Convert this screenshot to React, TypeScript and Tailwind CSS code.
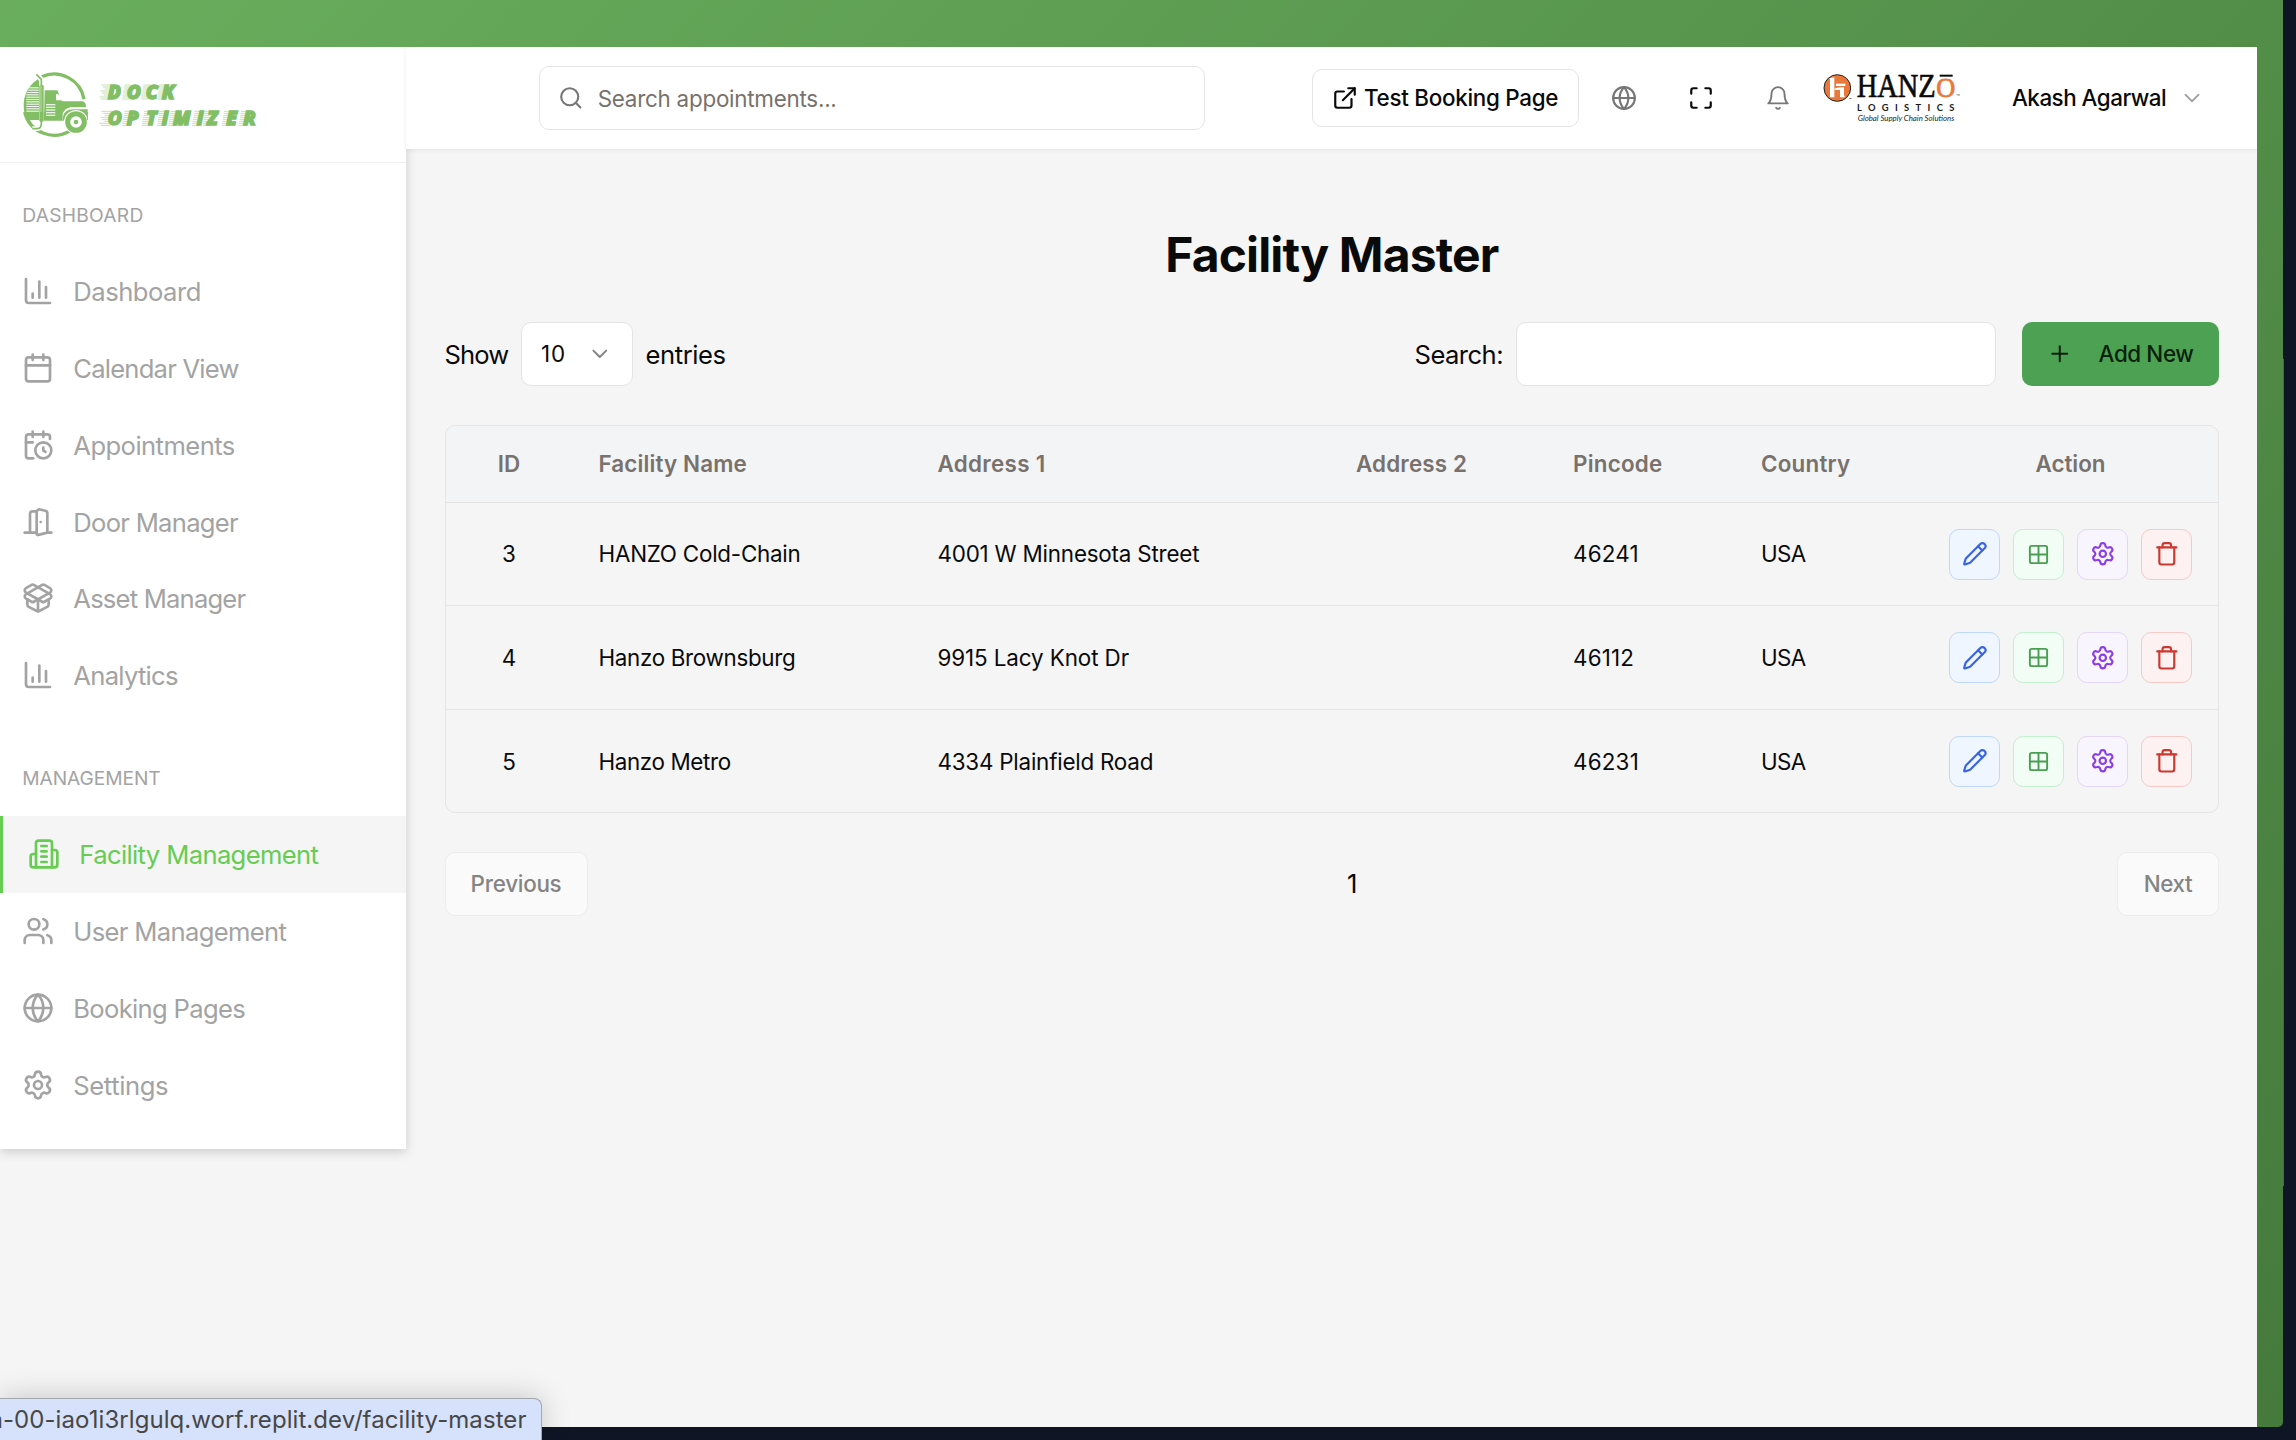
import {
  Calendar,
  CalendarClock,
  ChartColumn,
  ChevronDown,
  DoorOpen,
  ExternalLink,
  Globe,
  Grid2x2,
  Maximize,
  PackageOpen,
  Pencil,
  Plus,
  Search,
  Settings,
  Trash,
  Users,
} from "lucide-react";
import type { ComponentType } from "react";

type IconType = ComponentType<{ className?: string; strokeWidth?: number | string }>;
type NavEntry = { label: string; icon: IconType; tracking: string; active?: boolean };

function BuildingIcon({ className, strokeWidth = 2 }: { className?: string; strokeWidth?: number | string }) {
  return (
    <svg viewBox="0 0 24 24" fill="none" stroke="currentColor" strokeWidth={strokeWidth} strokeLinecap="round" strokeLinejoin="round" className={className}>
      <path d="M6 22V4a2 2 0 0 1 2-2h8a2 2 0 0 1 2 2v18Z" />
      <path d="M6 12H4a2 2 0 0 0-2 2v6a2 2 0 0 0 2 2h2" />
      <path d="M18 9h2a2 2 0 0 1 2 2v9a2 2 0 0 1-2 2h-2" />
      <path d="M10 6h4M10 10h4M10 14h4M10 18h4" />
    </svg>
  );
}

const dashboardNav: NavEntry[] = [
  { label: "Dashboard", icon: ChartColumn, tracking: "tracking-[-0.5px]" },
  { label: "Calendar View", icon: Calendar, tracking: "tracking-[-0.78px]" },
  { label: "Appointments", icon: CalendarClock, tracking: "tracking-[-0.56px]" },
  { label: "Door Manager", icon: DoorOpen, tracking: "tracking-[-0.72px]" },
  { label: "Asset Manager", icon: PackageOpen, tracking: "tracking-[-0.8px]" },
  { label: "Analytics", icon: ChartColumn, tracking: "tracking-[-0.72px]" },
];

const managementNav: NavEntry[] = [
  { label: "Facility Management", icon: BuildingIcon, tracking: "tracking-[-0.63px]", active: true },
  { label: "User Management", icon: Users, tracking: "tracking-[-0.65px]" },
  { label: "Booking Pages", icon: Globe, tracking: "tracking-[-0.68px]" },
  { label: "Settings", icon: Settings, tracking: "tracking-[-0.4px]" },
];

const facilities = [
  { id: 3, name: "HANZO Cold-Chain", nameT: "tracking-[-0.23px]", address: "4001 W Minnesota Street", addressT: "tracking-[-0.2px]", pin: "46241" },
  { id: 4, name: "Hanzo Brownsburg", nameT: "tracking-[-0.32px]", address: "9915 Lacy Knot Dr", addressT: "tracking-[-0.1px]", pin: "46112" },
  { id: 5, name: "Hanzo Metro", nameT: "tracking-[-0.37px]", address: "4334 Plainfield Road", addressT: "tracking-[-0.22px]", pin: "46231" },
];

const DOCK_X = [323, 380, 437, 485];
const OPTIMIZER_X = [323, 380, 439, 485, 519, 590, 622, 679, 730];

function SpeedLines({ xs, top }: { xs: number[]; top: number }) {
  return (
    <>
      {xs.map((x, i) =>
        [0, 1, 2, 3, 4, 5, 6, 7].map((n) => (
          <line
            key={`${i}-${n}`}
            x1={x - (i === 0 ? 26 - (n % 3) * 6 : 14) + (7 - n)}
            x2={x + 8 + (7 - n)}
            y1={top + n * 6}
            y2={top + n * 6}
            stroke="#82be64"
            strokeOpacity={0.6}
            strokeWidth={2.4}
          />
        )),
      )}
    </>
  );
}

function DockLogo() {
  return (
    <svg viewBox="60 120 720 210" className="h-[70px] w-[240px]" fill="none">
      <path d="M125 140A91 91 0 0 1 252 208" stroke="#82be64" strokeWidth="10" />
      <path d="M74 252Q60 186 113 148L117 152V268H84Z" fill="#82be64" />
      <path d="M74 246A91 91 0 0 0 212 301" stroke="#82be64" strokeWidth="10" />
      {[0, 1, 2, 3, 4, 5, 6, 7, 8, 9, 10].map((n) => (
        <rect key={n} x={n < 4 ? 88 - n * 3 : 79} y={172 + n * 7} width={n < 4 ? 28 + n * 3 : 38} height="3" fill="#fff" />
      ))}
      <path d="M84 246H134V270H88L78 256Z" fill="#82be64" />
      <path d="M109 133L124 147V282Q124 296 112 296H97" stroke="#fff" strokeWidth="14" />
      <path d="M109 133L124 148V280Q124 296 112 296H97" stroke="#82be64" strokeWidth="5" />
      <rect x="118" y="164" width="13" height="112" rx="5" fill="#82be64" />
      <rect x="122" y="166" width="2" height="80" fill="#fff" opacity=".7" />
      <path d="M134 181H172L179 198L174 192L168 193V211H183L188 214H248Q258 216 258 232H212Q196 234 188 250V272H132Z" fill="#82be64" />
      {[0, 1, 2, 3, 4].map((n) => (
        <rect key={n} x="138" y={222 + n * 8} width="28" height="4" fill="#fff" opacity=".85" />
      ))}
      <path d="M189 272V262Q192 238 220 238H263V272L259 272Q252 244 228 244Q200 244 195 272Z" fill="#82be64" />
      <circle cx="228" cy="276" r="36" fill="#fff" />
      <circle cx="228" cy="276" r="25" stroke="#82be64" strokeWidth="15" />
      <circle cx="228" cy="276" r="7" fill="#82be64" />
      <path d="M262 246V270" stroke="#82be64" strokeWidth="3" />
      <SpeedLines xs={DOCK_X} top={165} />
      <SpeedLines xs={OPTIMIZER_X} top={244} />
      <g fill="#82be64" stroke="#82be64" strokeWidth="4" className="font-['Open_Sans'] text-[58px] font-extrabold italic">
        <text y="206" x={DOCK_X.join(" ")}>DOCK</text>
        <text y="285" x={OPTIMIZER_X.join(" ")}>OPTIMIZER</text>
      </g>
    </svg>
  );
}

function HanzoLogo() {
  return (
    <svg viewBox="126 66 420 216" className="h-[72px] w-[140px]" fill="none">
      <circle cx="172" cy="144" r="40" fill="#e8793a" stroke="#222" strokeWidth="3" />
      <path d="M148 115L163 112V172H150V118Z" fill="#fff" />
      <path d="M168 131H196V138H168Z" fill="#fff" />
      <path d="M163 146Q172 140 192 142V166Q192 170 197 172H182Q180 172 180 168V150H163Z" fill="#fff" />
      <text x="206" y="179" fontSize="9" fill="#111" className="font-['Liberation_Sans'] font-bold">™</text>
      <text x="230" y="172" textLength="237" lengthAdjust="spacingAndGlyphs" fontSize="101" fill="#0a0a0a" stroke="#0a0a0a" strokeWidth="2" className="font-['Liberation_Serif']">
        HANZ
      </text>
      <text x="469" y="171" textLength="57" lengthAdjust="spacingAndGlyphs" fontSize="82" fill="#e8793a" stroke="#e8793a" strokeWidth="2.5" className="font-['Liberation_Serif']">
        O
      </text>
      <rect x="479" y="104" width="39" height="6" fill="#0a0a0a" />
      <text x="527" y="171" fontSize="13" fill="#555" className="font-['Liberation_Sans']">™</text>
      <text x="231" y="212" fontSize="28" fill="#1a1a1a" textLength="292" className="font-['Lato'] font-bold">LOGISTICS</text>
      <text x="233" y="243" fontSize="20" fill="#222" textLength="290" lengthAdjust="spacingAndGlyphs" className="font-['Lato'] italic">
        Global Supply Chain Solutions
      </text>
    </svg>
  );
}

function BellIcon() {
  return (
    <svg viewBox="0 0 24 24" fill="none" stroke="currentColor" strokeWidth="1.7" strokeLinecap="round" strokeLinejoin="round" className="size-[26px] text-[#777]">
      <path d="M6 8a6 6 0 0 1 12 0c0 7 3 9 3 9H3s3-2 3-9" />
      <path d="M10.3 21a1.94 1.94 0 0 0 3.4 0" />
    </svg>
  );
}

function NavItem({ label, icon: Icon, tracking, active }: NavEntry) {
  return (
    <a
      className={`flex h-[76.8px] items-center gap-[19.3px] whitespace-nowrap text-[25.6px] leading-none ${
        active ? "border-l-[3px] border-[#66cc52] bg-[#f5f5f5] pl-[25px] text-[#66cc52]" : "pl-[22px] text-[#a3a3a3]"
      }`}
    >
      <Icon className="size-8 shrink-0" strokeWidth={2} />
      <span className={`pt-[1.5px] ${tracking}`}>{label}</span>
    </a>
  );
}

function Sidebar() {
  return (
    <aside className="relative z-10 h-[1101.8px] w-[406px] shrink-0 bg-white shadow-[0_3px_10px_rgba(0,0,0,0.17)]">
      <div className="flex h-[116px] items-start border-b border-[#f2f2f2] pt-[23px] pl-5">
        <DockLogo />
      </div>
      <nav className="pt-[37.8px]">
        <h2 className="h-7 pl-[22.3px] text-[19.2px] leading-7 tracking-[0.25px] text-[#a3a3a3]">DASHBOARD</h2>
        <div className="pt-6">
          {dashboardNav.map((n) => (
            <NavItem key={n.label} {...n} />
          ))}
        </div>
        <h2 className="mt-[50.4px] h-7 pl-[22.3px] text-[19.2px] leading-7 tracking-[-0.08px] text-[#a3a3a3]">MANAGEMENT</h2>
        <div className="pt-6">
          {managementNav.map((n) => (
            <NavItem key={n.label} {...n} />
          ))}
        </div>
      </nav>
    </aside>
  );
}

function Header() {
  return (
    <header className="relative z-20 flex h-[102px] items-center bg-white pl-[133px] text-[22.4px] leading-none whitespace-nowrap shadow-[0_1px_4px_rgba(0,0,0,0.08)]">
      <div className="flex h-16 w-[666px] items-center rounded-[10px] border border-[#e4e4e4] pl-[17.5px]">
        <Search className="size-[25.6px] text-[#777]" strokeWidth={2} />
        <span className="pt-0.5 pl-[14.6px] tracking-[-0.24px] text-[#78716c]">Search appointments...</span>
      </div>
      <button className="ml-[107px] flex h-[58px] w-[267px] items-center rounded-[10px] border border-[#e4e4e4] pl-[18.5px] font-medium text-[#0a0a0a]">
        <ExternalLink className="size-[26px]" strokeWidth={2} />
        <span className="pl-[6.5px] tracking-[-0.28px]">Test Booking Page</span>
      </button>
      <Globe className="ml-[32px] size-[26px] text-[#777]" strokeWidth={2} />
      <Maximize className="ml-[51px] size-[26px] text-[#0a0a0a]" strokeWidth={2} />
      <div className="ml-[51px]">
        <BellIcon />
      </div>
      <div className="ml-[31px]">
        <HanzoLogo />
      </div>
      <span className="ml-[50px] font-medium tracking-[-0.5px] text-[#0a0a0a]">Akash Agarwal</span>
      <ChevronDown className="ml-[13px] size-[26px] text-[#a3a3a3]" strokeWidth={1.7} />
    </header>
  );
}

const actions: { icon: IconType; box: string; size: string }[] = [
  { icon: Pencil, box: "border-[#bfd7fb] bg-[#eff6ff] text-[#3763e6]", size: "size-[25.6px]" },
  { icon: Grid2x2, box: "border-[#c2f0cf] bg-[#f2fdf5] text-[#4a9f52]", size: "size-[23px]" },
  { icon: Settings, box: "border-[#e4d5fb] bg-[#f9f5ff] text-[#8b3ee6]", size: "size-[25.6px]" },
  { icon: Trash, box: "border-[#f6c9c6] bg-[#fdf2f1] text-[#cb3830]", size: "size-[25.6px]" },
];

const cols = "grid grid-cols-[127px_339px_418.5px_217px_188px_188px_1fr] items-center";

function FacilityTable() {
  return (
    <div className="mt-[39px] h-[388px] overflow-hidden rounded-[10px] border border-[#e4e4e4] text-[22.4px] leading-none whitespace-nowrap text-[#0a0a0a]">
      <div className={`${cols} h-[77px] border-b border-[#e4e2e1] bg-[#f3f4f6] pt-px font-semibold text-[#78716c]`}>
        <div className="text-center">ID</div>
        <div className="pl-[26px] tracking-[0.13px]">Facility Name</div>
        <div className="pl-[26px] tracking-[0.3px]">Address 1</div>
        <div className="pl-[26px] tracking-[0.15px]">Address 2</div>
        <div className="pl-[26px] tracking-[0.22px]">Pincode</div>
        <div className="pl-[26px] tracking-[0.22px]">Country</div>
        <div className="text-center">Action</div>
      </div>
      {facilities.map((f) => (
        <div key={f.id} className={`${cols} h-[103.3px] border-b border-[#e4e4e4] last:border-0`}>
          <div className="pt-px text-center">{f.id}</div>
          <div className={`pt-px pl-[26px] ${f.nameT}`}>{f.name}</div>
          <div className={`pt-px pl-[26px] ${f.addressT}`}>{f.address}</div>
          <div />
          <div className="pt-px pl-[26px] tracking-[0.2px]">{f.pin}</div>
          <div className="pt-px pl-[26px] tracking-[-0.6px]">USA</div>
          <div className="flex justify-center gap-[12.8px]">
            {actions.map(({ icon: Icon, box, size }, i) => (
              <button key={i} className={`flex size-[51.2px] items-center justify-center rounded-[10px] border ${box}`}>
                <Icon className={size} strokeWidth={2} />
              </button>
            ))}
          </div>
        </div>
      ))}
    </div>
  );
}

function Content() {
  return (
    <section className="flex flex-col pt-[76px] pr-[38px] pl-[38.5px] text-[#0a0a0a]">
      <h1 className="text-center text-[48px] leading-[60px] font-bold tracking-[-0.86px]">Facility Master</h1>
      <div className="mt-[37px] flex h-16 items-center text-[25.6px] leading-none whitespace-nowrap">
        <span className="w-[76px] pt-[1.5px] tracking-[-0.9px]">Show</span>
        <div className="flex h-16 w-28 items-center justify-between rounded-[10px] border border-[#e4e4e4] bg-white pr-[19px] pl-[19.5px] text-[22.4px]">
          <span className="tracking-[0.8px]">10</span>
          <ChevronDown className="size-[25.6px] text-[#858585]" strokeWidth={1.9} />
        </div>
        <span className="ml-[13px] pt-[1.5px] tracking-[-0.43px]">entries</span>
        <span className="ml-auto pt-[1.5px] tracking-[-0.55px]">Search:</span>
        <div className="ml-[13px] h-16 w-[480px] rounded-[10px] border border-[#e4e4e4] bg-white" />
        <button className="ml-[26px] flex h-16 w-[197px] items-center rounded-[10px] bg-[#4da153] pl-[25px] text-[22.4px] font-medium text-[#0c210d]">
          <Plus className="size-[25.6px]" strokeWidth={1.9} />
          <span className="pl-[26px] tracking-[-0.4px]">Add New</span>
        </button>
      </div>
      <FacilityTable />
      <div className="mt-[39px] flex h-16 items-center justify-between text-[22.4px] leading-none font-medium">
        <button className="h-16 w-[143px] rounded-[10px] border border-[#ececec] bg-[#fafafa] pt-px tracking-[-0.26px] text-[#848484]">Previous</button>
        <span className="text-[25.6px] font-normal">1</span>
        <button className="h-16 w-[102px] rounded-[10px] border border-[#ececec] bg-[#fafafa] pt-px tracking-[-0.4px] text-[#848484]">Next</button>
      </div>
    </section>
  );
}

export default function App() {
  return (
    <div className="relative h-[1440px] w-[2296px] overflow-hidden bg-[#0f1524] font-['Inter',sans-serif]">
      <div className="h-[1427px] w-[2283px] rounded-br-[5px] bg-[linear-gradient(135deg,#69ae5d,#457a3c)] pt-[47px] pr-[26px]">
        <div className="flex h-[1380px] items-start overflow-hidden bg-[#f5f5f5]">
          <Sidebar />
          <main className="min-w-0 flex-1">
            <Header />
            <Content />
          </main>
        </div>
      </div>
      <div className="absolute top-[359px] left-[2283px] h-[827px] w-px bg-[#565c60]" />
      <div className="absolute bottom-0 left-0 flex h-[42px] w-[541.5px] rounded-tr-[8px] border-t border-r border-[#a5a7ab] bg-[#d6e1fb] shadow-[0_0_30px_rgba(0,0,0,0.2)]">
        <div className="flex h-full w-full items-center justify-end overflow-hidden pr-[14px] text-[24px] leading-none whitespace-nowrap text-[#474747]">
          <span className="tracking-[0.07px]">n-00-iao1i3rlgulq.worf.replit.dev/facility-master</span>
        </div>
      </div>
    </div>
  );
}
